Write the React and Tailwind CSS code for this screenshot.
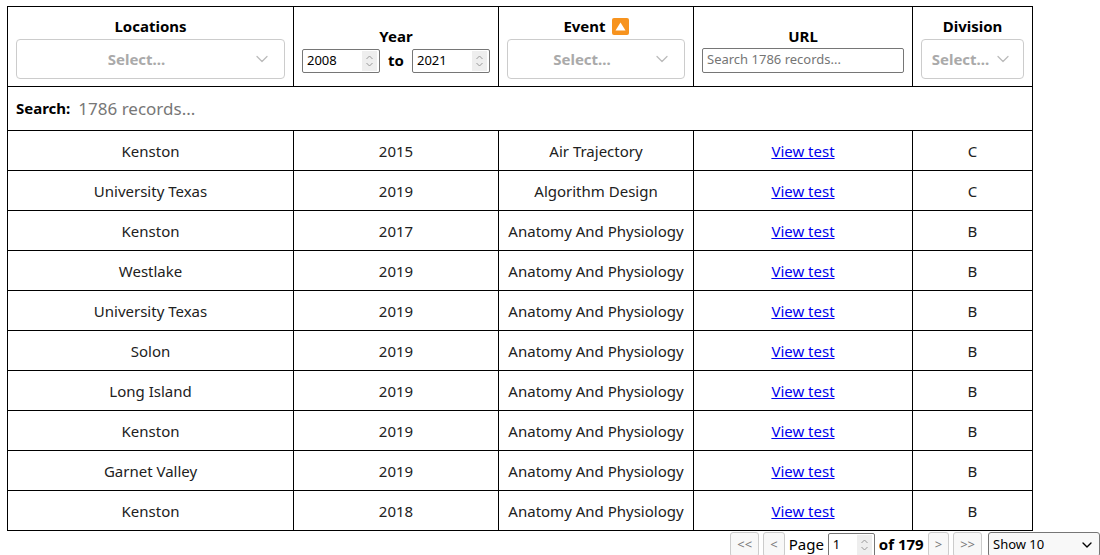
import { ChevronDown } from 'lucide-react';

const rows = [
  { location: 'Kenston', year: 2015, event: 'Air Trajectory', division: 'C' },
  { location: 'University Texas', year: 2019, event: 'Algorithm Design', division: 'C' },
  { location: 'Kenston', year: 2017, event: 'Anatomy And Physiology', division: 'B' },
  { location: 'Westlake', year: 2019, event: 'Anatomy And Physiology', division: 'B' },
  { location: 'University Texas', year: 2019, event: 'Anatomy And Physiology', division: 'B' },
  { location: 'Solon', year: 2019, event: 'Anatomy And Physiology', division: 'B' },
  { location: 'Long Island', year: 2019, event: 'Anatomy And Physiology', division: 'B' },
  { location: 'Kenston', year: 2019, event: 'Anatomy And Physiology', division: 'B' },
  { location: 'Garnet Valley', year: 2019, event: 'Anatomy And Physiology', division: 'B' },
  { location: 'Kenston', year: 2018, event: 'Anatomy And Physiology', division: 'B' },
];

const FakeSelect = ({ className = '' }) => (
  <div className={`flex items-center h-10 border border-[#ccc] rounded-[4px] bg-white ${className}`}>
    <span className="flex-1 text-center font-bold text-[#aaa] text-[15px] pl-1">Select...</span>
    <ChevronDown className="w-5 h-5 text-[#bbb] mr-3 shrink-0" strokeWidth={1.5} />
  </div>
);

const Spinner = () => (
  <span className="flex flex-col items-center justify-center w-[15px] h-[20px] bg-[#eee] text-[#999]">
    <svg width="9" height="14" viewBox="0 0 9 14" fill="none" stroke="currentColor" strokeWidth="1">
      <path d="M1.5 5L4.5 2L7.5 5" />
      <path d="M1.5 9L4.5 12L7.5 9" />
    </svg>
  </span>
);

const NumBox = ({ value, className = '' }) => (
  <div className={`flex items-center h-6 border border-[#767676] rounded-[2px] bg-white pl-1 pr-0.5 ${className}`}>
    <span className="flex-1 text-left text-[13px] font-normal text-black">{value}</span>
    <Spinner />
  </div>
);

const PageBtn = ({ children }) => (
  <span className="flex items-center justify-center h-[25px] px-1.5 border border-[#ccc] rounded-[3px] bg-[#f8f8f8] text-[13px] text-[#777]">
    {children}
  </span>
);

export default function App() {
  return (
    <div className="pl-[7px] pt-[6px] bg-white min-h-[555px] text-[#212121]" style={{ fontFamily: '"Noto Sans", "Open Sans", sans-serif' }}>
      <table className="border-collapse table-fixed w-[1026px]">
        <colgroup>
          <col className="w-[286px]" />
          <col className="w-[205px]" />
          <col className="w-[195px]" />
          <col className="w-[219px]" />
          <col className="w-[120px]" />
        </colgroup>
        <thead>
          <tr className="h-[80px]">
            <th className="border border-black align-top px-2 pt-2">
              <div className="text-[15px] leading-[22px] font-bold text-black">Locations</div>
              <FakeSelect className="mt-[2px] mb-[6px]" />
            </th>
            <th className="border border-black px-2">
              <div className="text-[15px] leading-[22px] font-bold text-black mt-2">Year</div>
              <div className="flex items-center justify-between mt-[2px] mb-[4px]">
                <NumBox value="2008" className="w-[78px]" />
                <span className="text-[15px] font-bold text-black">to</span>
                <NumBox value="2021" className="w-[78px]" />
              </div>
            </th>
            <th className="border border-black align-top px-2 pt-2">
              <div className="flex items-center justify-center gap-1.5 text-[15px] leading-[22px] font-bold text-black">
                Event
                <span className="flex items-center justify-center w-[17px] h-[17px] bg-[#f7931e] rounded-[2px]">
                  <svg width="11" height="9" viewBox="0 0 11 9"><path d="M5.5 0.5L10.5 8.5H0.5Z" fill="#fff" /></svg>
                </span>
              </div>
              <FakeSelect className="mt-[2px] mb-[6px]" />
            </th>
            <th className="border border-black px-2">
              <div className="text-[15px] leading-[22px] font-bold text-black mt-2">URL</div>
              <div className="flex items-center h-[25px] border border-[#767676] rounded-[2px] mt-[1px] mb-[4px] px-1 text-[13px] font-normal text-[#757575] text-left">
                Search 1786 records...
              </div>
            </th>
            <th className="border border-black align-top px-2 pt-2">
              <div className="text-[15px] leading-[22px] font-bold text-black">Division</div>
              <div className="flex items-center justify-center gap-1 h-10 mt-[2px] border border-[#ccc] rounded-[4px]">
                <span className="font-bold text-[#aaa] text-[15px]">Select...</span>
                <ChevronDown className="w-5 h-5 text-[#bbb]" strokeWidth={1.5} />
              </div>
            </th>
          </tr>
        </thead>
        <tbody>
          <tr className="h-[44px]">
            <td colSpan={5} className="border border-black px-2">
              <div className="flex items-center gap-2">
                <span className="text-[15px] font-bold text-black">Search:</span>
                <span className="text-[17px] text-[#777]">1786 records...</span>
              </div>
            </td>
          </tr>
          {rows.map((row, i) => (
            <tr key={i} className="h-10 text-[15px] text-center">
              <td className="border border-black pt-0.5">{row.location}</td>
              <td className="border border-black pt-0.5">{row.year}</td>
              <td className="border border-black pt-0.5">{row.event}</td>
              <td className="border border-black pt-0.5">
                <a href="#" className="text-[#0000ee] underline">View test</a>
              </td>
              <td className="border border-black pt-0.5">{row.division}</td>
            </tr>
          ))}
        </tbody>
      </table>
      <div className="flex justify-end items-center gap-1 mt-[1px] h-[25px]">
        <PageBtn>&lt;&lt;</PageBtn>
        <PageBtn>&lt;</PageBtn>
        <span className="text-[15px] text-black">Page</span>
        <div className="flex items-center h-6 w-[47px] border border-[#767676] rounded-[2px] pl-1 pr-0.5">
          <span className="flex-1 text-[13px] text-black">1</span>
          <Spinner />
        </div>
        <span className="text-[15px] font-bold text-black">of 179</span>
        <PageBtn>&gt;</PageBtn>
        <PageBtn>&gt;&gt;</PageBtn>
        <div className="flex items-center w-[112px] h-[25px] border border-[#767676] rounded-[3px] bg-[#f8f8f8] px-1 ml-0.5">
          <span className="flex-1 text-[13px] text-black">Show 10</span>
          <ChevronDown className="w-4 h-4 text-black" strokeWidth={2} />
        </div>
      </div>
    </div>
  );
}
